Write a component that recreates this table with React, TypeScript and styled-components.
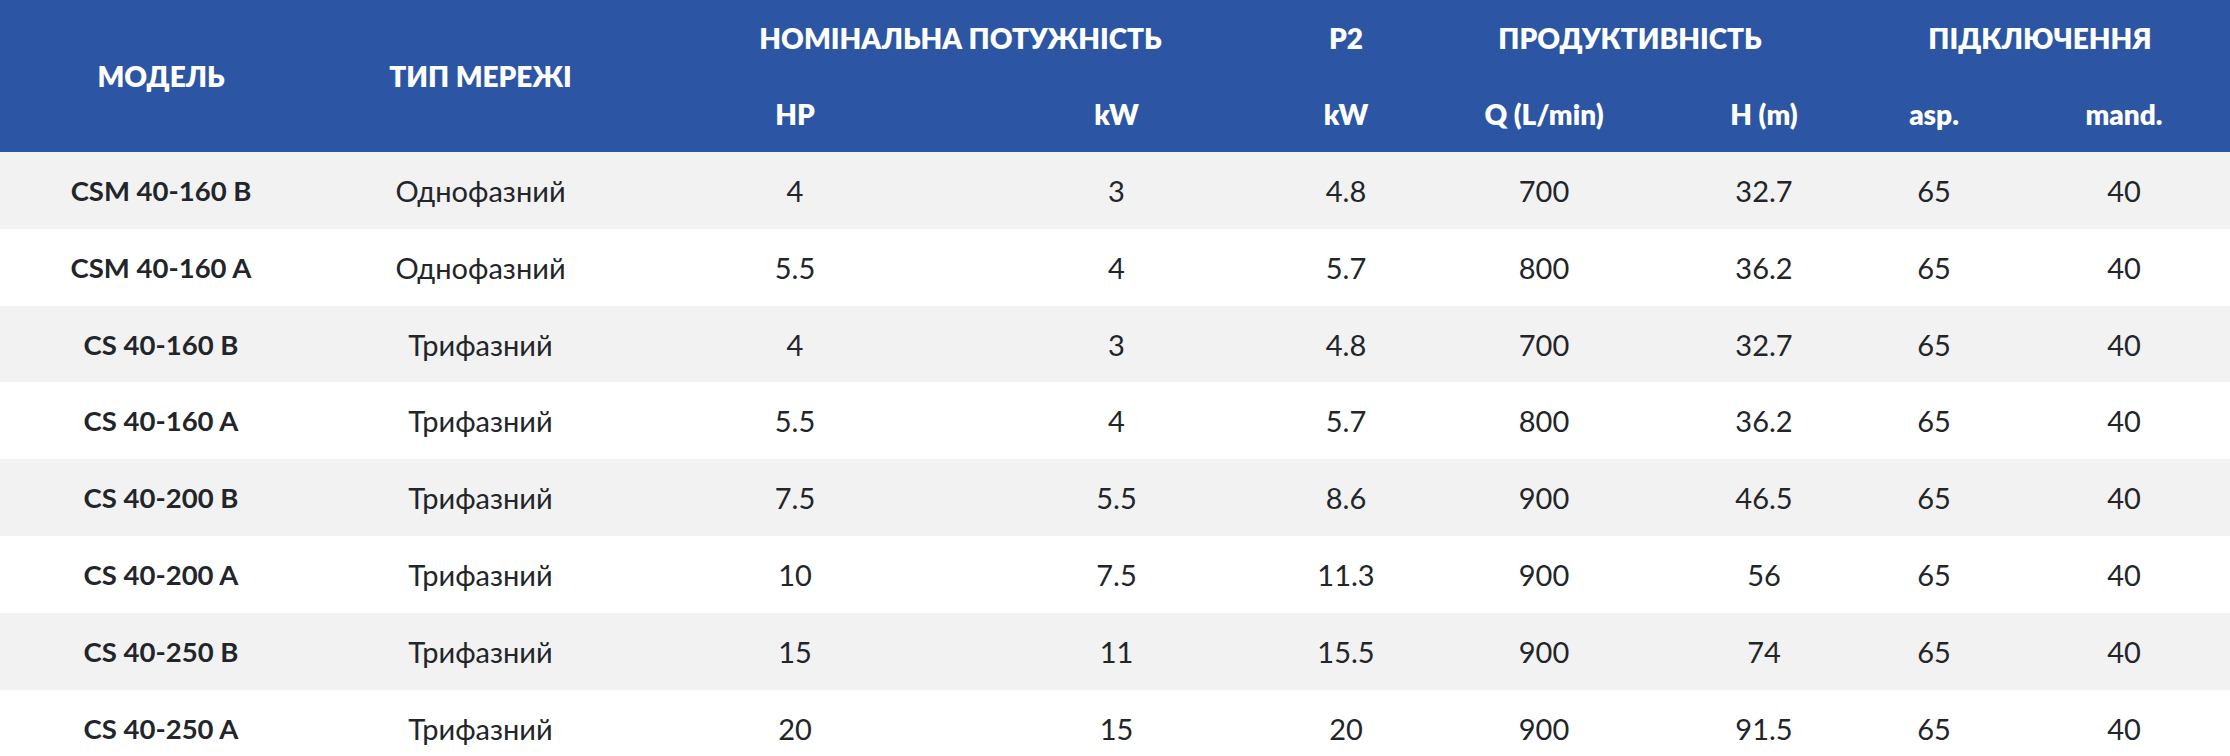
import React from "react";
import styled, { createGlobalStyle } from "styled-components";

const Global = createGlobalStyle`
  html, body { margin: 0; padding: 0; background: #ffffff; }
  body { font-family: "Lato", "Open Sans", sans-serif; }
`;

const Table = styled.table`
  width: 2230px;
  border-collapse: collapse;
  table-layout: fixed;
  font-family: "Lato", "Open Sans", sans-serif;
`;

const Head = styled.thead`
  background: #2c56a3;
  color: #ffffff;
`;

const HeadRow = styled.tr`
  height: 76px;
`;

const Th = styled.th`
  padding: 0;
  font-size: 28px;
  font-weight: 800;
  text-align: center;
  vertical-align: middle;
`;

const BodyRow = styled.tr<{ $shade: boolean }>`
  height: 76.83px;
  background: ${(p) => (p.$shade ? "#f2f2f2" : "#ffffff")};
`;

const Td = styled.td<{ $bold?: boolean }>`
  padding: 0;
  font-size: ${(p) => (p.$bold ? "27.5px" : "29px")};
  font-weight: ${(p) => (p.$bold ? 700 : 400)};
  color: #222529;
  text-align: center;
  vertical-align: middle;
`;

const widths = [322, 317, 312, 331, 128, 268, 172, 168, 212];

const rows: string[][] = [
  ["CSM 40-160 B", "Однофазний", "4", "3", "4.8", "700", "32.7", "65", "40"],
  ["CSM 40-160 A", "Однофазний", "5.5", "4", "5.7", "800", "36.2", "65", "40"],
  ["CS 40-160 B", "Трифазний", "4", "3", "4.8", "700", "32.7", "65", "40"],
  ["CS 40-160 A", "Трифазний", "5.5", "4", "5.7", "800", "36.2", "65", "40"],
  ["CS 40-200 B", "Трифазний", "7.5", "5.5", "8.6", "900", "46.5", "65", "40"],
  ["CS 40-200 A", "Трифазний", "10", "7.5", "11.3", "900", "56", "65", "40"],
  ["CS 40-250 B", "Трифазний", "15", "11", "15.5", "900", "74", "65", "40"],
  ["CS 40-250 A", "Трифазний", "20", "15", "20", "900", "91.5", "65", "40"],
];

export default function App() {
  return (
    <>
      <Global />
      <Table>
        <colgroup>
          {widths.map((w, i) => (
            <col key={i} style={{ width: w }} />
          ))}
        </colgroup>
        <Head>
          <HeadRow>
            <Th rowSpan={2}>МОДЕЛЬ</Th>
            <Th rowSpan={2}>ТИП МЕРЕЖІ</Th>
            <Th colSpan={2}>НОМІНАЛЬНА ПОТУЖНІСТЬ</Th>
            <Th>P2</Th>
            <Th colSpan={2}>ПРОДУКТИВНІСТЬ</Th>
            <Th colSpan={2}>ПІДКЛЮЧЕННЯ</Th>
          </HeadRow>
          <HeadRow>
            <Th>HP</Th>
            <Th>kW</Th>
            <Th>kW</Th>
            <Th>Q (L/min)</Th>
            <Th>H (m)</Th>
            <Th>asp.</Th>
            <Th>mand.</Th>
          </HeadRow>
        </Head>
        <tbody>
          {rows.map((r, i) => (
            <BodyRow key={i} $shade={i % 2 === 0}>
              {r.map((c, j) => (
                <Td key={j} $bold={j === 0}>
                  {c}
                </Td>
              ))}
            </BodyRow>
          ))}
        </tbody>
      </Table>
    </>
  );
}
